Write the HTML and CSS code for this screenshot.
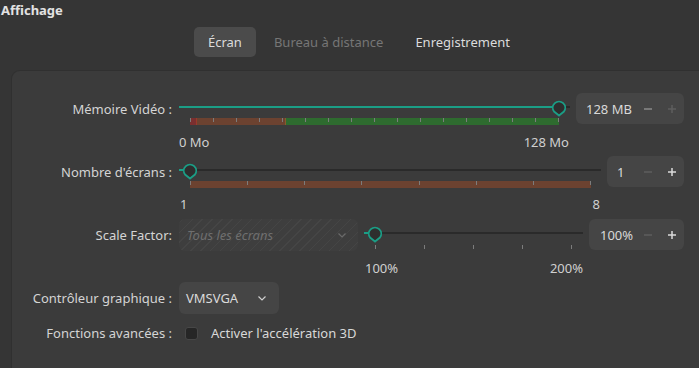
FILE: index.html
```html
<!DOCTYPE html>
<html lang="fr">
<head>
    <meta charset="UTF-8">
    <meta name="viewport" content="width=device-width, initial-scale=1.0">
    <title>Affichage</title>
    <link rel="stylesheet" href="styles.css">
</head>
<body>
    <div class="title">Affichage</div>

    <div class="tabs">
        <div class="tab active">Écran</div>
        <div class="tab disabled">Bureau à distance</div>
        <div class="tab">Enregistrement</div>
    </div>

    <div class="panel">
        <!-- Mémoire vidéo -->
        <div class="row row-mem">
            <div class="label">Mémoire Vidéo :</div>
            <div class="slider slider-mem">
                <div class="track">
                    <div class="fill" style="width: 380px"></div>
                    <svg class="handle" style="left: 372px" width="16" height="18" viewBox="0 0 16 18"><path d="M8 15.5 L3.03 11.5 A6.2 6.2 0 1 1 12.97 11.5 Z"/></svg>
                </div>
                <div class="bar bar-mem">
                    <div class="seg seg-red" style="width: 6px"></div>
                    <div class="seg seg-brown" style="width: 88px"></div>
                    <div class="seg seg-green"></div>
                    <div class="ticks">
                        <i></i><i></i><i></i><i></i><i></i><i></i><i></i><i></i><i></i>
                        <i></i><i></i><i></i><i></i><i></i><i></i><i></i><i></i>
                    </div>
                </div>
                <div class="scale"><span>0 Mo</span><span>128 Mo</span></div>
            </div>
            <div class="spin spin-mem">
                <span class="value">128 MB</span>
                <span class="btn mid"><svg width="10" height="10" viewBox="0 0 10 10"><path d="M1 5 H9"/></svg></span>
                <span class="btn off"><svg width="10" height="10" viewBox="0 0 10 10"><path d="M1 5 H9 M5 1 V9"/></svg></span>
            </div>
        </div>

        <!-- Nombre d'écrans -->
        <div class="row row-screens">
            <div class="label">Nombre d'écrans :</div>
            <div class="slider slider-screens">
                <div class="track">
                    <div class="fill" style="width: 11px"></div>
                    <svg class="handle" style="left: 3px" width="16" height="18" viewBox="0 0 16 18"><path d="M8 15.5 L3.03 11.5 A6.2 6.2 0 1 1 12.97 11.5 Z"/></svg>
                </div>
                <div class="bar bar-screens">
                    <div class="seg seg-brown full"></div>
                    <div class="ticks">
                        <i></i><i></i><i></i><i></i><i></i><i></i><i></i><i></i>
                    </div>
                </div>
                <div class="scale"><span>1</span><span>8</span></div>
            </div>
            <div class="spin spin-screens">
                <span class="value">1</span>
                <span class="btn off"><svg width="10" height="10" viewBox="0 0 10 10"><path d="M1 5 H9"/></svg></span>
                <span class="btn"><svg width="10" height="10" viewBox="0 0 10 10"><path d="M1 5 H9 M5 1 V9"/></svg></span>
            </div>
        </div>

        <!-- Scale factor -->
        <div class="row row-scale">
            <div class="label">Scale Factor:</div>
            <div class="combo combo-disabled">
                <span class="combo-text">Tous les écrans</span>
                <svg class="chevron" width="8" height="5" viewBox="0 0 8 5"><path d="M0.5 0.5 L4 4 L7.5 0.5"/></svg>
            </div>
            <div class="slider slider-scale">
                <div class="track">
                    <div class="fill" style="width: 11px"></div>
                    <svg class="handle" style="left: 3px" width="16" height="18" viewBox="0 0 16 18"><path d="M8 15.5 L3.03 11.5 A6.2 6.2 0 1 1 12.97 11.5 Z"/></svg>
                </div>
                <div class="ticks-below">
                    <i></i><i></i><i></i><i></i><i></i>
                </div>
                <div class="scale"><span>100%</span><span>200%</span></div>
            </div>
            <div class="spin spin-scale">
                <span class="value">100%</span>
                <span class="btn off"><svg width="10" height="10" viewBox="0 0 10 10"><path d="M1 5 H9"/></svg></span>
                <span class="btn"><svg width="10" height="10" viewBox="0 0 10 10"><path d="M1 5 H9 M5 1 V9"/></svg></span>
            </div>
        </div>

        <!-- Contrôleur graphique -->
        <div class="row row-ctrl">
            <div class="label">Contrôleur graphique :</div>
            <div class="combo combo-ctrl">
                <span class="combo-text">VMSVGA</span>
                <svg class="chevron" width="8" height="5" viewBox="0 0 8 5"><path d="M0.5 0.5 L4 4 L7.5 0.5"/></svg>
            </div>
        </div>

        <!-- Fonctions avancées -->
        <div class="row row-adv">
            <div class="label">Fonctions avancées :</div>
            <span class="checkbox"></span>
            <span class="check-label">Activer l'accélération 3D</span>
        </div>
    </div>
</body>
</html>
```

FILE: styles.css
```css
body {
    margin: 0;
    width: 699px;
    height: 368px;
    overflow: hidden;
    background-color: #353535;
    color: #d8d8d8;
    font-family: "Noto Sans", "DejaVu Sans", sans-serif;
    font-size: 13px;
}

.title {
    font-weight: bold;
    line-height: 20px;
    padding-left: 1px;
    color: #e2e2e2;
}

.tabs {
    display: flex;
    gap: 4px;
    margin: 7px 0 0 194px;
}
.tab {
    height: 30px;
    line-height: 30px;
    padding: 0 14px;
    border-radius: 5px;
    color: #dcdcdc;
}
.tab.active {
    background-color: #4b4b4b;
}
.tab.disabled {
    color: #767676;
}

.panel {
    margin: 13px 0 0 11px;
    padding-top: 22px;
    height: 275px;
    background-color: #3b3b3b;
    border-top: 1px solid #303030;
    border-left: 1px solid #303030;
    border-top-left-radius: 9px;
}

.row {
    display: flex;
    align-items: flex-start;
}
.label {
    width: 160px;
    flex-shrink: 0;
    margin-right: 7px;
    text-align: right;
    line-height: 18px;
    margin-top: 7px;
    color: #d4d4d4;
}

.row-screens { margin-top: 5px; }
.row-scale { margin-top: 6px; }
.row-ctrl { margin-top: 5px; }
.row-ctrl .label { margin-top: 7px; }
.row-adv { margin-top: 8px; }
.row-adv .label { margin-top: 0; line-height: 22px; }

/* sliders */
.slider {
    margin-top: 7px;
    margin-right: 6px;
}
.slider-mem { width: 391px; }
.slider-screens { width: 422px; }
.slider-scale { width: 219px; }

.track {
    position: relative;
    height: 14px;
}
.track::before {
    content: "";
    position: absolute;
    left: 0;
    right: 0;
    top: 6px;
    height: 2px;
    background-color: #2a2a2a;
}
.fill {
    position: absolute;
    left: 0;
    top: 6px;
    height: 2px;
    background-color: #1b9e86;
}
.handle {
    position: absolute;
    top: 0;
}
.handle path {
    fill: #2e2e2e;
    stroke: #1b9e86;
    stroke-width: 1.8;
}

.bar {
    position: relative;
    display: flex;
    margin: 4px 0 0 11px;
    height: 7px;
}
.bar-mem { width: 369px; }
.bar-screens { width: 401px; }
.seg { height: 7px; }
.seg-red { background-color: #7a2f2f; border-right: 1px solid #9a3a2a; }
.seg-brown { background-color: #6c4230; border-right: 1px solid #8a5a2a; }
.seg-green { flex: 1; background-color: #2e6b2f; }
.seg.full { flex: 1; border-right: none; }

.ticks {
    position: absolute;
    left: 0;
    right: 0;
    top: 0;
    display: flex;
    justify-content: space-between;
}
.ticks i, .ticks-below i {
    display: block;
    width: 1px;
    height: 4px;
    background-color: #7c7c7c;
}
.ticks-below {
    display: flex;
    justify-content: space-between;
    width: 197px;
    margin: 5px 0 0 11px;
}

.scale {
    display: flex;
    justify-content: space-between;
    line-height: 18px;
    margin-top: 7px;
    color: #d0d0d0;
}
.slider-mem .scale { width: 390px; margin-top: 8px; }
.slider-screens .scale { width: 420px; padding-left: 1px; }
.slider-scale .scale { width: 218px; padding-left: 1px; margin-top: 10px; }

/* spin boxes */
.spin {
    display: flex;
    align-items: center;
    height: 31px;
    padding-left: 10px;
    border-radius: 6px;
    background-color: #454545;
    box-sizing: border-box;
}
.spin-mem { width: 108px; }
.spin-screens { width: 77px; }
.spin-scale { width: 95px; padding-left: 11px; }
.spin .value {
    flex: 1;
    color: #d8d8d8;
}
.btn {
    width: 24px;
    display: flex;
    justify-content: center;
}
.btn path {
    stroke: #dadada;
    stroke-width: 1.5;
    fill: none;
}
.btn.mid path { stroke: #8a8a8a; }
.btn.off path { stroke: #5e5e5e; }

/* combo boxes */
.combo {
    display: flex;
    align-items: center;
    height: 32px;
    border-radius: 6px;
    box-sizing: border-box;
    margin-right: 6px;
}
.combo-disabled {
    width: 179px;
    padding: 0 12px 0 8px;
    background-color: #3e3e3e;
    background-image: repeating-linear-gradient(-45deg, transparent 0, transparent 6px, #454545 6px, #454545 7px);
}
.combo-disabled .combo-text {
    flex: 1;
    font-style: italic;
    color: #6f6f6f;
}
.combo-disabled .chevron path { stroke: #6a6a6a; }
.combo-ctrl {
    width: 100px;
    padding: 0 13px 0 7px;
    background-color: #454545;
}
.combo-ctrl .combo-text {
    flex: 1;
    color: #dadada;
}
.chevron path {
    fill: none;
    stroke: #cfcfcf;
    stroke-width: 1.2;
}

/* checkbox */
.checkbox {
    width: 13px;
    height: 13px;
    margin: 5px 0 0 6px;
    background-color: #262626;
    border: 1px solid #474747;
    border-radius: 3px;
    box-sizing: border-box;
}
.check-label {
    margin-left: 13px;
    line-height: 22px;
    color: #d8d8d8;
}
```
